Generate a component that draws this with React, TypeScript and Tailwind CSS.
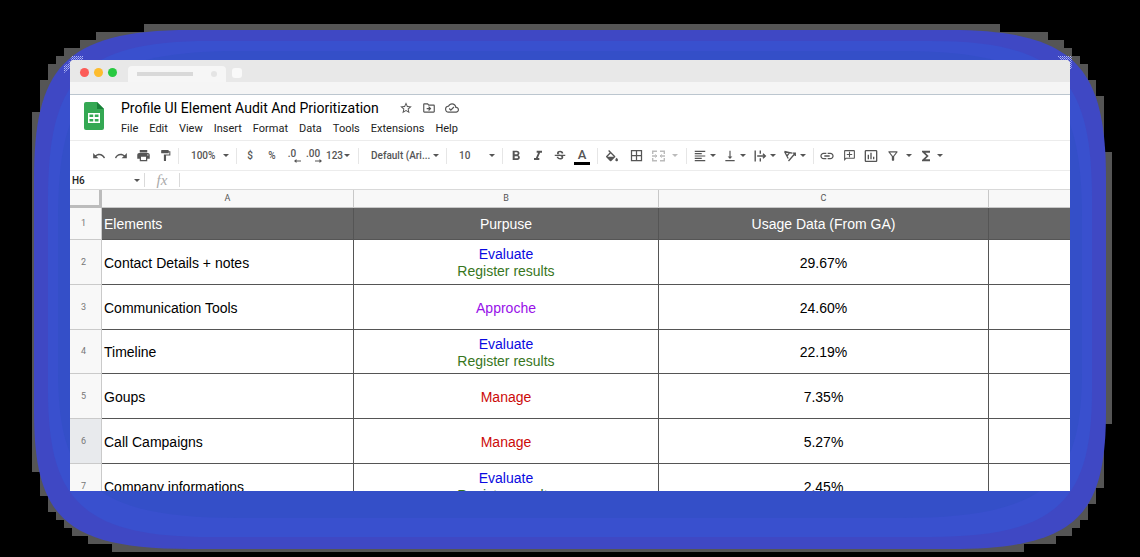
import type { ReactNode } from "react";
import {
  MdBorderAll,
  MdFormatAlignLeft,
  MdFormatBold,
  MdFormatItalic,
  MdFormatPaint,
  MdFunctions,
  MdInsertChartOutlined,
  MdLink,
  MdOutlineAddComment,
  MdOutlineCloudDone,
  MdOutlineDriveFileMove,
  MdOutlineFilterAlt,
  MdPrint,
  MdRedo,
  MdStarBorder,
  MdStrikethroughS,
  MdUndo,
  MdVerticalAlignBottom,
} from "react-icons/md";

type Tag = { label: string; color: string };
type Row = { element: string; tags: Tag[]; usage: string };

const evaluate: Tag = { label: "Evaluate", color: "text-[#0a0ae0]" };
const register: Tag = { label: "Register results", color: "text-[#38761d]" };
const approach: Tag = { label: "Approche", color: "text-[#9810e8]" };
const manage: Tag = { label: "Manage", color: "text-[#cc0a0a]" };

const rows: Row[] = [
  { element: "Contact Details + notes", tags: [evaluate, register], usage: "29.67%" },
  { element: "Communication Tools", tags: [approach], usage: "24.60%" },
  { element: "Timeline", tags: [evaluate, register], usage: "22.19%" },
  { element: "Goups", tags: [manage], usage: "7.35%" },
  { element: "Call Campaigns", tags: [manage], usage: "5.27%" },
  { element: "Company informations", tags: [evaluate, register], usage: "2.45%" },
];

const menus = ["File", "Edit", "View", "Insert", "Format", "Data", "Tools", "Extensions", "Help"];

function Caret({ className = "text-[#555]" }: { className?: string }) {
  return (
    <svg viewBox="0 0 6 3" className={`h-[3px] w-[6px] shrink-0 ${className}`} fill="currentColor" aria-hidden="true">
      <path d="M0 0h6L3 3z" />
    </svg>
  );
}

function Tool({ label, children, className = "w-[22px]" }: { label: string; children: ReactNode; className?: string }) {
  return (
    <button type="button" aria-label={label} className={`flex h-6 shrink-0 items-center justify-center ${className}`}>
      {children}
    </button>
  );
}

function DropTool({ label, children }: { label: string; children: ReactNode }) {
  return (
    <button type="button" aria-label={label} className="flex h-6 w-[30px] shrink-0 items-center gap-[3px] pl-1">
      {children}
      <Caret />
    </button>
  );
}

function Divider() {
  return <span className="mx-[2px] h-4 w-px shrink-0 bg-[#e6e6e6]" />;
}

function Picker({ label, value, className }: { label: string; value: string; className: string }) {
  return (
    <label className={`flex shrink-0 items-center pl-[10px] pr-[5px] ${className}`}>
      <select aria-label={label} className="min-w-0 flex-1 appearance-none bg-transparent outline-none">
        <option>{value}</option>
      </select>
      <Caret />
    </label>
  );
}

function Glow() {
  return (
    <svg
      viewBox="0 0 1140 557"
      preserveAspectRatio="none"
      className="absolute inset-0 h-full w-full"
      aria-hidden="true"
    >
      <defs>
        <pattern id="speckle" width="2" height="2" patternUnits="userSpaceOnUse">
          <rect width="1" height="1" fill="#b4baf5" />
          <rect x="1" y="1" width="1" height="1" fill="#8a90ee" />
        </pattern>
      </defs>
      <path
        shapeRendering="crispEdges"
        fill="#555"
        d="M144 24H1000V32H1048V40H1064V48H1072V56H1080V64H1088V80H1096V96H1104V152H1112V424H1104V488H1096V504H1088V520H1080V528H1072V536H1056V544H1024V552H112V544H88V536H72V528H64V520H56V512H48V496H40V472H32V112H40V80H48V64H56V56H64V48H80V40H96V32H144Z"
      />
      <path
        fill="#3f48c4"
        d="M34 180C34 70 62 30 190 30H950C1078 30 1106 70 1106 180V410C1106 515 1078 549 950 549H190C62 549 34 515 34 410Z"
      />
      <path
        fill="#3950ce"
        d="M48 200C48 80 80 41 210 41H930C1060 41 1092 80 1092 200V390C1092 498 1060 537 930 537H210C80 537 48 498 48 390Z"
      />
      <path
        fill="#344fc8"
        d="M58 220C58 92 90 51 240 51H900C1050 51 1082 92 1082 220V370C1082 480 1050 518 900 518H240C90 518 58 480 58 370Z"
      />
      <path fill="url(#speckle)" d="M72 56H83V60H70V68L64 73V65L68 64Z" />
      <path fill="url(#speckle)" d="M1057 56H1072V69H1070V60H1061Z" />
    </svg>
  );
}

function TabStrip() {
  return (
    <div className="shrink-0">
      <div className="flex h-[22px] items-end bg-[#e8e8e8] pl-[10px]">
        <div className="flex h-[18px] gap-[5px] pt-1">
          <span className="size-[9px] rounded-full bg-[#fc5b57]" />
          <span className="size-[9px] rounded-full bg-[#fdbc2e]" />
          <span className="size-[9px] rounded-full bg-[#28c941]" />
        </div>
        <div className="ml-[11px] flex h-4 w-[98px] items-center rounded-t bg-[#f6f6f6] px-[9px]">
          <span className="h-1 w-[56px] bg-[#d9d9d9]" />
          <span className="ml-auto size-[6px] rounded-sm bg-[#e4e4e4]" />
        </div>
        <span className="mb-1 ml-[6px] size-[10px] rounded-[3px] bg-[#f9f9f9]" />
      </div>
      <div className="h-[13px] border-b border-[#bcc6cf] bg-[#f5f5f5]" />
    </div>
  );
}

function SheetHeader() {
  return (
    <header className="flex h-[46px] shrink-0 border-b border-[#ececec] pl-[14px] pt-[7px]">
      <svg viewBox="0 0 20 28" className="h-7 w-5 shrink-0" role="img" aria-label="Sheets">
        <path d="M2 0H13L20 7V26a2 2 0 0 1-2 2H2a2 2 0 0 1-2-2V2a2 2 0 0 1 2-2Z" fill="#34a853" />
        <path d="M13 0L20 7H13Z" fill="#188038" />
        <path
          fillRule="evenodd"
          fill="#fff"
          d="M4 11H16V21H4ZM5.500 12.500V15H9.200V12.500ZM10.800 12.500V15H14.500V12.500ZM5.500 17V19.500H9.200V17ZM10.800 17V19.500H14.500V17Z"
        />
      </svg>
      <div className="ml-[17px]">
        <div className="-mt-[3px] flex h-[18px] items-center text-[#555]">
          <h1 className="mr-5 whitespace-nowrap text-sm text-black">Profile UI Element Audit And Prioritization</h1>
          <div className="flex gap-[9px]">
            <button type="button" aria-label="Star"><MdStarBorder size={14} /></button>
            <button type="button" aria-label="Move"><MdOutlineDriveFileMove size={14} /></button>
            <button type="button" aria-label="Saved to Drive"><MdOutlineCloudDone size={14} /></button>
          </div>
        </div>
        <nav className="mt-1 flex gap-[11px] text-[11px] leading-4 text-[#222]">
          {menus.map((m) => (
            <button type="button" key={m}>{m}</button>
          ))}
        </nav>
      </div>
    </header>
  );
}

function Toolbar() {
  return (
    <div className="flex h-[30px] shrink-0 items-center border-b border-[#ececec] pl-[18px] text-[10px] font-medium text-[#555]">
      <Tool label="Undo"><MdUndo size={14} /></Tool>
      <Tool label="Redo"><MdRedo size={14} /></Tool>
      <Tool label="Print"><MdPrint size={15} /></Tool>
      <Tool label="Paint format"><MdFormatPaint size={13} /></Tool>
      <Divider />
      <Picker label="Zoom" value="100%" className="w-[53px]" />
      <Divider />
      <Tool label="Currency">$</Tool>
      <Tool label="Percent">%</Tool>
      <Tool label="Decrease decimals" className="w-[18px] flex-col">
        <span className="leading-[10px]">.0</span>
        <svg viewBox="0 0 7 4" className="ml-[10px] h-1 w-[7px]" aria-hidden="true">
          <path d="M7 1.500H2.500V0L0 2 2.500 4V2.500H7Z" fill="currentColor" />
        </svg>
      </Tool>
      <Tool label="Increase decimals" className="w-[24px] flex-col">
        <span className="leading-[10px]">.00</span>
        <svg viewBox="0 0 7 4" className="ml-[10px] h-1 w-[7px]" aria-hidden="true">
          <path d="M0 1.500H4.500V0L7 2 4.500 4V2.500H0Z" fill="currentColor" />
        </svg>
      </Tool>
      <Tool label="More formats" className="w-[26px] gap-[1px]">
        123
        <Caret />
      </Tool>
      <span className="w-[5px]" />
      <Divider />
      <Picker label="Font" value="Default (Ari..." className="w-[83px]" />
      <Divider />
      <Picker label="Font size" value="10" className="w-[51px]" />
      <Divider />
      <Tool label="Bold"><MdFormatBold size={16} /></Tool>
      <Tool label="Italic"><MdFormatItalic size={16} /></Tool>
      <Tool label="Strikethrough"><MdStrikethroughS size={14} /></Tool>
      <Tool label="Text colour">
        <span className="w-4 border-b-[3px] border-black text-center text-[13px] leading-[15px]">A</span>
      </Tool>
      <span className="w-[2px]" />
      <Divider />
      <Tool label="Fill colour" className="w-6">
        <svg viewBox="3 0 18 18" className="size-3" fill="currentColor" aria-hidden="true">
          <path d="M16.560 8.940L7.620 0 6.210 1.410l2.380 2.380-5.150 5.150c-.59.59-.59 1.540 0 2.120l5.500 5.500c.29.29.68.44 1.060.44s.77-.15 1.060-.44l5.500-5.500c.59-.58.59-1.530 0-2.120zM5.210 10L10 5.210 14.790 10H5.210zM19 11.500s-2 2.170-2 3.500c0 1.100.9 2 2 2s2-.9 2-2c0-1.330-2-3.500-2-3.500z" />
        </svg>
      </Tool>
      <Tool label="Borders" className="w-6"><MdBorderAll size={15} /></Tool>
      <button type="button" aria-label="Merge cells" className="flex h-6 w-9 shrink-0 items-center gap-[7px] pl-1 text-[#bbb]">
        <svg viewBox="0 0 13 12" className="h-3 w-[13px]" fill="none" stroke="currentColor" strokeWidth="1.400" aria-hidden="true">
          <path d="M.7 4V1.200H5M8 1.200h4.300V4M.7 8v2.800H5M8 10.800h4.300V8M0 6h4.500M13 6H8.500" />
          <path d="M3.200 4.500L5 6 3.200 7.500M9.800 4.500L8 6l1.800 1.500" strokeWidth="1" />
        </svg>
        <Caret className="text-[#bbb]" />
      </button>
      <Divider />
      <DropTool label="Horizontal align"><MdFormatAlignLeft size={14} /></DropTool>
      <DropTool label="Vertical align"><MdVerticalAlignBottom size={14} /></DropTool>
      <DropTool label="Text wrapping">
        <svg viewBox="0 0 14 14" className="size-[14px]" fill="none" stroke="currentColor" strokeWidth="1.400" aria-hidden="true">
          <path d="M2.200 1.500v11M7.300 1.500v3.300M7.300 9.200v3.300M4.200 7h8M10 4.800L12.300 7 10 9.200" />
        </svg>
      </DropTool>
      <DropTool label="Text rotation">
        <svg viewBox="0 0 14 14" className="size-[14px]" fill="none" stroke="currentColor" strokeWidth="1.300" aria-hidden="true">
          <path d="M1.500 2.500L9 4.200M1.500 2.500L5.200 9.500M6.300 3.800L4 7M5.500 12L12 4.500M9.500 4.200h2.800V7" />
        </svg>
      </DropTool>
      <span className="w-[2px]" />
      <Divider />
      <Tool label="Insert link"><MdLink size={16} /></Tool>
      <Tool label="Insert comment"><MdOutlineAddComment size={13} className="-scale-x-100" /></Tool>
      <Tool label="Insert chart"><MdInsertChartOutlined size={16} /></Tool>
      <Tool label="Create filter"><MdOutlineFilterAlt size={14} /></Tool>
      <Tool label="Filter views" className="w-[10px]"><Caret /></Tool>
      <Tool label="Functions" className="w-6"><MdFunctions size={16} /></Tool>
      <Tool label="More functions" className="w-1"><Caret /></Tool>
    </div>
  );
}

function FormulaBar() {
  return (
    <div className="flex h-[19px] shrink-0 items-center border-b border-[#d9d9d9] text-[10px]">
      <input aria-label="Cell" defaultValue="H6" className="ml-[2px] w-[62px] font-medium text-[#222] outline-none" />
      <button type="button" aria-label="Named ranges"><Caret /></button>
      <span className="ml-[4px] h-[14px] w-px bg-[#dadada]" />
      <span className="w-[34px] text-center font-['Liberation_Serif',serif] text-[15px] italic leading-4 text-[#aaa]">fx</span>
      <span className="h-[14px] w-px bg-[#dadada]" />
      <input aria-label="Formula" className="min-w-0 flex-1 px-2 outline-none" />
    </div>
  );
}

const rowHead = "border-b border-r border-[#cacaca] pr-1 text-center font-['Roboto',sans-serif] text-[9px] font-normal text-[#777]";
const cell = "border-b border-r border-[#555] pt-[2px]";
const colHead = "border-b border-[#c8c8c8] bg-[#f8f8f8] text-[9px] leading-none font-normal text-[#555]";

function Sheet() {
  return (
    <div className="min-h-0 flex-1 overflow-hidden">
      <table className="w-full table-fixed border-separate border-spacing-0 font-['Liberation_Sans',sans-serif] text-[14px] leading-[17px] text-black">
        <colgroup>
          <col className="w-8" />
          <col className="w-[252px]" />
          <col className="w-[305px]" />
          <col className="w-[330px]" />
          <col />
        </colgroup>
        <thead className="font-['Roboto',sans-serif]">
          <tr className="h-[18px]">
            <td className="border-b-[3px] border-r-[3px] border-[#bcbcbc] bg-[#f8f8f8] p-0" />
            <th scope="col" className={`${colHead} border-r`}>A</th>
            <th scope="col" className={`${colHead} border-r`}>B</th>
            <th scope="col" className={`${colHead} border-r`}>C</th>
            <td className={colHead} />
          </tr>
        </thead>
        <tbody>
          <tr className="h-8 bg-[#666] text-white">
            <th scope="row" className={`${rowHead} bg-[#f8f8f8]`}>1</th>
            <td className={`${cell} pl-[2px]`}>Elements</td>
            <td className={`${cell} text-center`}>Purpuse</td>
            <td className={`${cell} text-center`}>Usage Data (From GA)</td>
            <td className="border-b border-[#555]" />
          </tr>
          {rows.map((row, i) => (
            <tr key={row.element} className={i === 2 ? "h-11" : "h-[45px]"}>
              <th scope="row" className={`${rowHead} ${i === 4 ? "bg-[#e8eaed]" : "bg-[#f8f8f8]"}`}>{i + 2}</th>
              <td className={`${cell} pl-[2px]`}>{row.element}</td>
              <td className={`${cell} text-center`}>
                {row.tags.map((t) => (
                  <div key={t.label} className={t.color}>{t.label}</div>
                ))}
              </td>
              <td className={`${cell} text-center`}>{row.usage}</td>
              <td className="border-b border-[#555]" />
            </tr>
          ))}
        </tbody>
      </table>
    </div>
  );
}

export default function App() {
  return (
    <main className="relative flex h-screen flex-col overflow-hidden bg-black px-[70px] pb-[66px] pt-[60px] font-['Roboto',sans-serif]">
      <Glow />
      <section className="relative flex min-h-0 flex-1 flex-col overflow-hidden rounded-t bg-white">
        <TabStrip />
        <SheetHeader />
        <Toolbar />
        <FormulaBar />
        <Sheet />
      </section>
    </main>
  );
}
